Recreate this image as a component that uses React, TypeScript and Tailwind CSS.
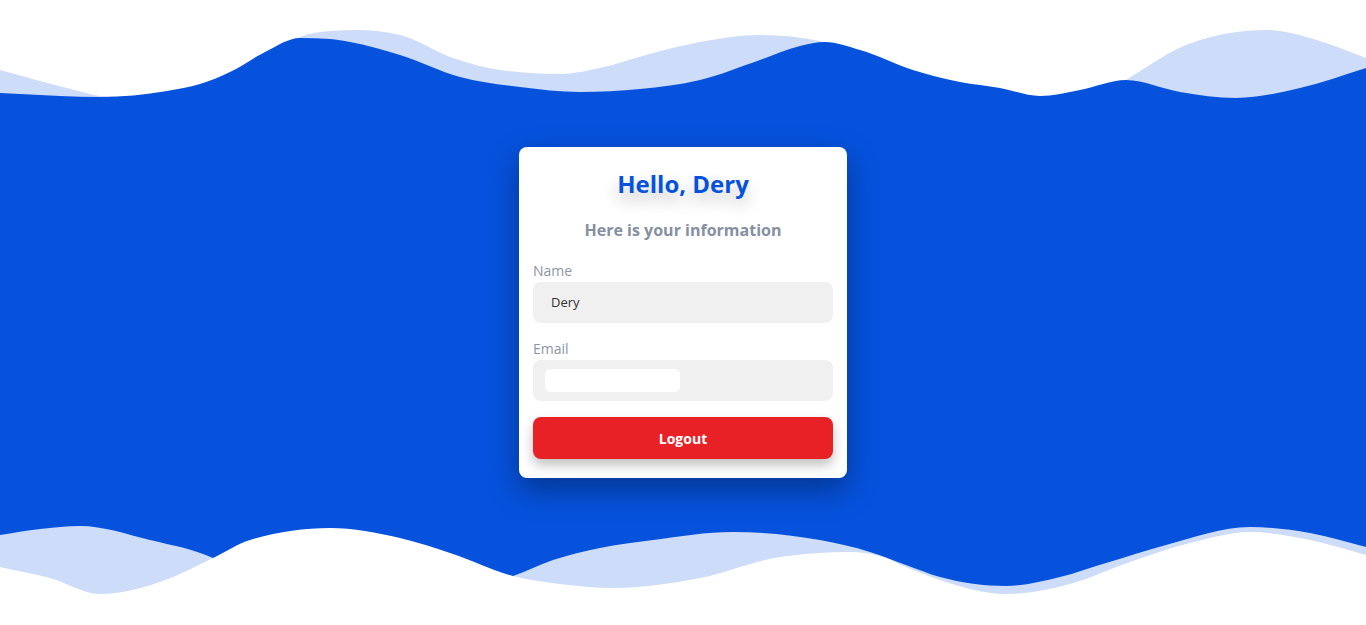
import React from "react";

type Pt = [number, number];

// monotone cubic through the points, so the waves don't overshoot
const smooth = (pts: Pt[]) => {
    const n = pts.length;
    const slopes: number[] = [];
    for (let i = 0; i < n; i++) {
        if (i === 0 || i === n - 1) {
            const a = pts[i === 0 ? 0 : n - 2];
            const b = pts[i === 0 ? 1 : n - 1];
            slopes.push((b[1] - a[1]) / (b[0] - a[0]));
            continue;
        }
        const h0 = pts[i][0] - pts[i - 1][0];
        const h1 = pts[i + 1][0] - pts[i][0];
        const s0 = (pts[i][1] - pts[i - 1][1]) / h0;
        const s1 = (pts[i + 1][1] - pts[i][1]) / h1;
        const p = (s0 * h1 + s1 * h0) / (h0 + h1);
        const m = (Math.sign(s0) + Math.sign(s1)) * Math.min(Math.abs(s0), Math.abs(s1), 0.5 * Math.abs(p));
        slopes.push(m || 0);
    }
    let d = `M${pts[0][0]},${pts[0][1]}`;
    for (let i = 0; i < n - 1; i++) {
        const [x1, y1] = pts[i];
        const [x2, y2] = pts[i + 1];
        const dx = (x2 - x1) / 3;
        d += ` C${(x1 + dx).toFixed(1)},${(y1 + slopes[i] * dx).toFixed(1)} ${(x2 - dx).toFixed(1)},${(y2 - slopes[i + 1] * dx).toFixed(1)} ${x2},${y2}`;
    }
    return d;
};

const lightTop: Pt[] = [
    [0, 70], [67, 88], [100, 96], [150, 100], [210, 92], [260, 62], [300, 37], [330, 31], [357, 30],
    [400, 35], [453, 58], [500, 70], [560, 74], [600, 68], [653, 53], [700, 42], [760, 35], [820, 41],
    [880, 64], [950, 92], [1040, 104], [1100, 96], [1126, 80], [1186, 45], [1230, 33], [1266, 30],
    [1310, 38], [1340, 48], [1366, 58],
];

const darkTop: Pt[] = [
    [0, 93], [60, 96], [100, 97], [167, 91], [200, 84], [230, 72], [265, 52], [300, 38], [330, 39],
    [350, 42], [400, 55], [460, 77], [520, 87], [580, 92], [640, 89], [700, 80], [760, 60], [800, 46],
    [825, 42], [860, 50], [913, 70], [960, 82], [1000, 88], [1040, 96], [1080, 90], [1126, 80],
    [1180, 92], [1236, 98], [1300, 88], [1366, 68],
];

const lightBottom: Pt[] = [
    [0, 535], [40, 529], [80, 526], [150, 540], [213, 558], [260, 585], [350, 598], [450, 592],
    [513, 576], [553, 560], [600, 548], [653, 540], [733, 532], [820, 540], [870, 552], [906, 565],
    [940, 577], [1006, 586], [1060, 577], [1106, 563], [1166, 545], [1250, 527], [1310, 533], [1366, 547],
];

const whiteBottom: Pt[] = [
    [0, 567], [50, 578], [100, 594], [160, 582], [213, 558], [250, 540], [330, 528], [400, 538],
    [453, 554], [513, 576], [560, 584], [613, 588], [700, 578], [780, 557], [850, 552], [880, 556],
    [906, 567], [940, 580], [1006, 594], [1070, 584], [1130, 562], [1190, 543], [1250, 532],
    [1310, 540], [1366, 555],
];

const Waves = () => (
    <svg
        className="absolute inset-0 w-full h-full"
        viewBox="0 0 1366 625"
        preserveAspectRatio="none"
    >
        <path d={`${smooth(lightTop)} L1366,320 L0,320 Z`} fill="#cddcf8" />
        <path d={`${smooth(darkTop)} L1366,625 L0,625 Z`} fill="#0652dd" />
        <path d={`${smooth(lightBottom)} L1366,625 L0,625 Z`} fill="#cddcf8" />
        <path d={`${smooth(whiteBottom)} L1366,625 L0,625 Z`} fill="#ffffff" />
    </svg>
);

export default function App() {
    return (
        <div className="relative h-screen min-h-[625px] w-full overflow-hidden bg-white flex items-center justify-center font-['Open_Sans',sans-serif]">
            <Waves />

            <div className="relative z-10 w-[328px] bg-white rounded-lg px-[14px] pt-[20px] pb-[19px] shadow-[0_12px_30px_rgba(0,0,0,0.35)]">
                <h1 className="text-center text-[24px] leading-[33px] font-bold text-[#0652dd] [text-shadow:0_8px_16px_rgba(0,0,0,0.25)]">
                    Hello, Dery
                </h1>
                <h2 className="mt-[19px] text-center text-[16px] leading-[22px] font-bold text-[#8590a2]">
                    Here is your information
                </h2>

                <div className="mt-[20px] flex flex-col">
                    <label className="text-[14px] leading-[20px] text-[#8a96a8]">Name</label>
                    <div className="mt-[1px] h-[41px] rounded-lg bg-[#f0f0f0] flex items-center pl-[18px] text-[13px] text-[#333]">
                        Dery
                    </div>

                    <label className="mt-[16px] text-[14px] leading-[20px] text-[#8a96a8]">Email</label>
                    <div className="mt-[1px] h-[41px] rounded-lg bg-[#f0f0f0] flex items-center pl-[12px]">
                        <div className="w-[135px] h-[23px] rounded-[5px] bg-white" />
                    </div>

                    <button className="mt-[16px] h-[42px] rounded-lg bg-[#e82127] text-white text-[14px] font-bold shadow-[0_6px_12px_rgba(0,0,0,0.25)]">
                        Logout
                    </button>
                </div>
            </div>
        </div>
    );
}
